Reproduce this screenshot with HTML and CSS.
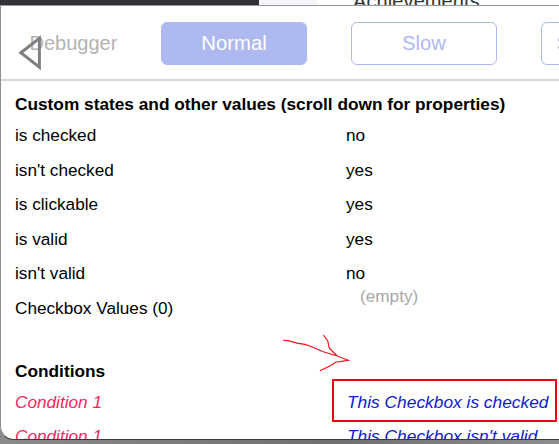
FILE: index.html
```html
<!DOCTYPE html>
<html lang="en">
<head>
<meta charset="utf-8">
<title>Debugger</title>
<link rel="stylesheet" href="styles.css">
</head>
<body>
<div class="screen">
  <div class="behind">
    <div class="behind-dark"></div>
    <div class="behind-light"></div>
    <div class="behind-title">Achievements</div>
  </div>
  <div class="panel">
    <header class="toolbar">
      <span class="toolbar-title">Debugger</span>
      <span class="btn btn-on">Normal</span>
      <span class="btn">Slow</span>
      <span class="btn">Step-by-step</span>
    </header>
    <section class="content">
      <h2 class="heading">Custom states and other values (scroll down for properties)</h2>
      <div class="row"><span>is checked</span><span>no</span></div>
      <div class="row"><span>isn't checked</span><span>yes</span></div>
      <div class="row"><span>is clickable</span><span>yes</span></div>
      <div class="row"><span>is valid</span><span>yes</span></div>
      <div class="row"><span>isn't valid</span><span>no</span></div>
      <div class="row row-list"><span class="row-label">Checkbox Values (0)</span><span class="empty">(empty)</span></div>
      <h2 class="heading heading-cond">Conditions</h2>
      <div class="row row-cond"><span class="cond">Condition 1</span><span class="effect">This Checkbox is checked</span></div>
      <div class="row row-cond"><span class="cond">Condition 1</span><span class="effect">This Checkbox isn't valid</span></div>
    </section>
    <svg class="back" width="30" height="44" viewBox="0 0 30 44" aria-hidden="true"><path d="M3.8 18.7 L22.4 4.2 V33.2 Z" fill="none" stroke="#808080" stroke-width="3"/></svg>
    <div class="highlight"></div>
    <svg class="arrow" width="80" height="45" viewBox="280 330 80 45" aria-hidden="true"><path d="M283.3 340.3 L288 340.6 L298.3 343.3 L305 344.4 L311.7 346.7 L323.3 351.7 L337.3 356 L341.7 357.7 L348.3 360.3 L340 361.7 L336 362 L331.7 365 L320 370.7 M323.3 335 L327.7 340.7 L329.3 348.3 L337.3 356" fill="none" stroke="#f0101a" stroke-width="1.2"/></svg>
  </div>
</div>
</body>
</html>
```
FILE: styles.css
```css
* { box-sizing: border-box; }
html, body { margin: 0; height: 100%; }
body { background: #fff; font-family: "Liberation Sans", Arial, sans-serif; color: #000; overflow: hidden; }
.screen { position: relative; width: 559px; height: 444px; overflow: hidden; display: flex; flex-direction: column; background: linear-gradient(90deg, #8a8a8a, #6f6f6f 60%, #8d8d8d); }
.behind { height: 6px; flex: none; display: flex; background: #fff; overflow: hidden; border-bottom: 1px solid #9a9a9a; }
.behind-dark { width: 259px; background: #333337; }
.behind-light { width: 58px; background: #f3f3f8; }
.behind-title { margin-left: 36px; font-size: 20px; line-height: 20px; margin-top: -9px; color: #333; letter-spacing: 0.1px; }
.panel { position: relative; height: 434px; flex: none; background: #fff; border-left: 1px solid #8f8f8f; border-bottom: 1px solid #3c3c3c; border-bottom-left-radius: 14px; overflow: hidden; }
.toolbar { height: 75px; display: flex; gap: 44px; padding: 16px 0 0 160px; border-bottom: 2px solid #d6d6d6; position: relative; overflow: hidden; }
.toolbar-title { position: absolute; left: 28.5px; top: 25px; font-size: 20px; line-height: 24px; color: #b3b3b3; }
.btn { flex: none; width: 146px; height: 43px; border: 1px solid #adb9ef; border-radius: 6px; color: #adb9ef; font-size: 20.3px; line-height: 41px; text-align: center; white-space: nowrap; }
.btn-on { background: #adb9ef; color: #fff; }
.content { padding: 13px 0 0 14px; }
.heading { margin: 0; font-size: 17.27px; line-height: 20px; font-weight: 700; white-space: nowrap; }
.row { display: grid; grid-template-columns: 331px 1fr; height: 34.5px; font-size: 17.2px; line-height: 20px; padding-top: 11px; white-space: nowrap; }
.row-list { padding-top: 0; }
.row-label { padding-top: 11.5px; }
.empty { color: #a8a8a8; padding-left: 14px; margin-top: -0.5px; }
.heading-cond { margin-top: 40px; }
.row-cond { height: 34px; }
.cond { color: #f5265f; font-style: italic; }
.effect { color: #1020d0; font-style: italic; font-size: 17.35px; padding-left: 1px; }
.back { position: absolute; left: 16px; top: 28px; }
.highlight { position: absolute; left: 331px; top: 373px; width: 225px; height: 43px; border: 2.5px solid #f00010; }
.arrow { position: absolute; left: 279px; top: 324px; }
```
